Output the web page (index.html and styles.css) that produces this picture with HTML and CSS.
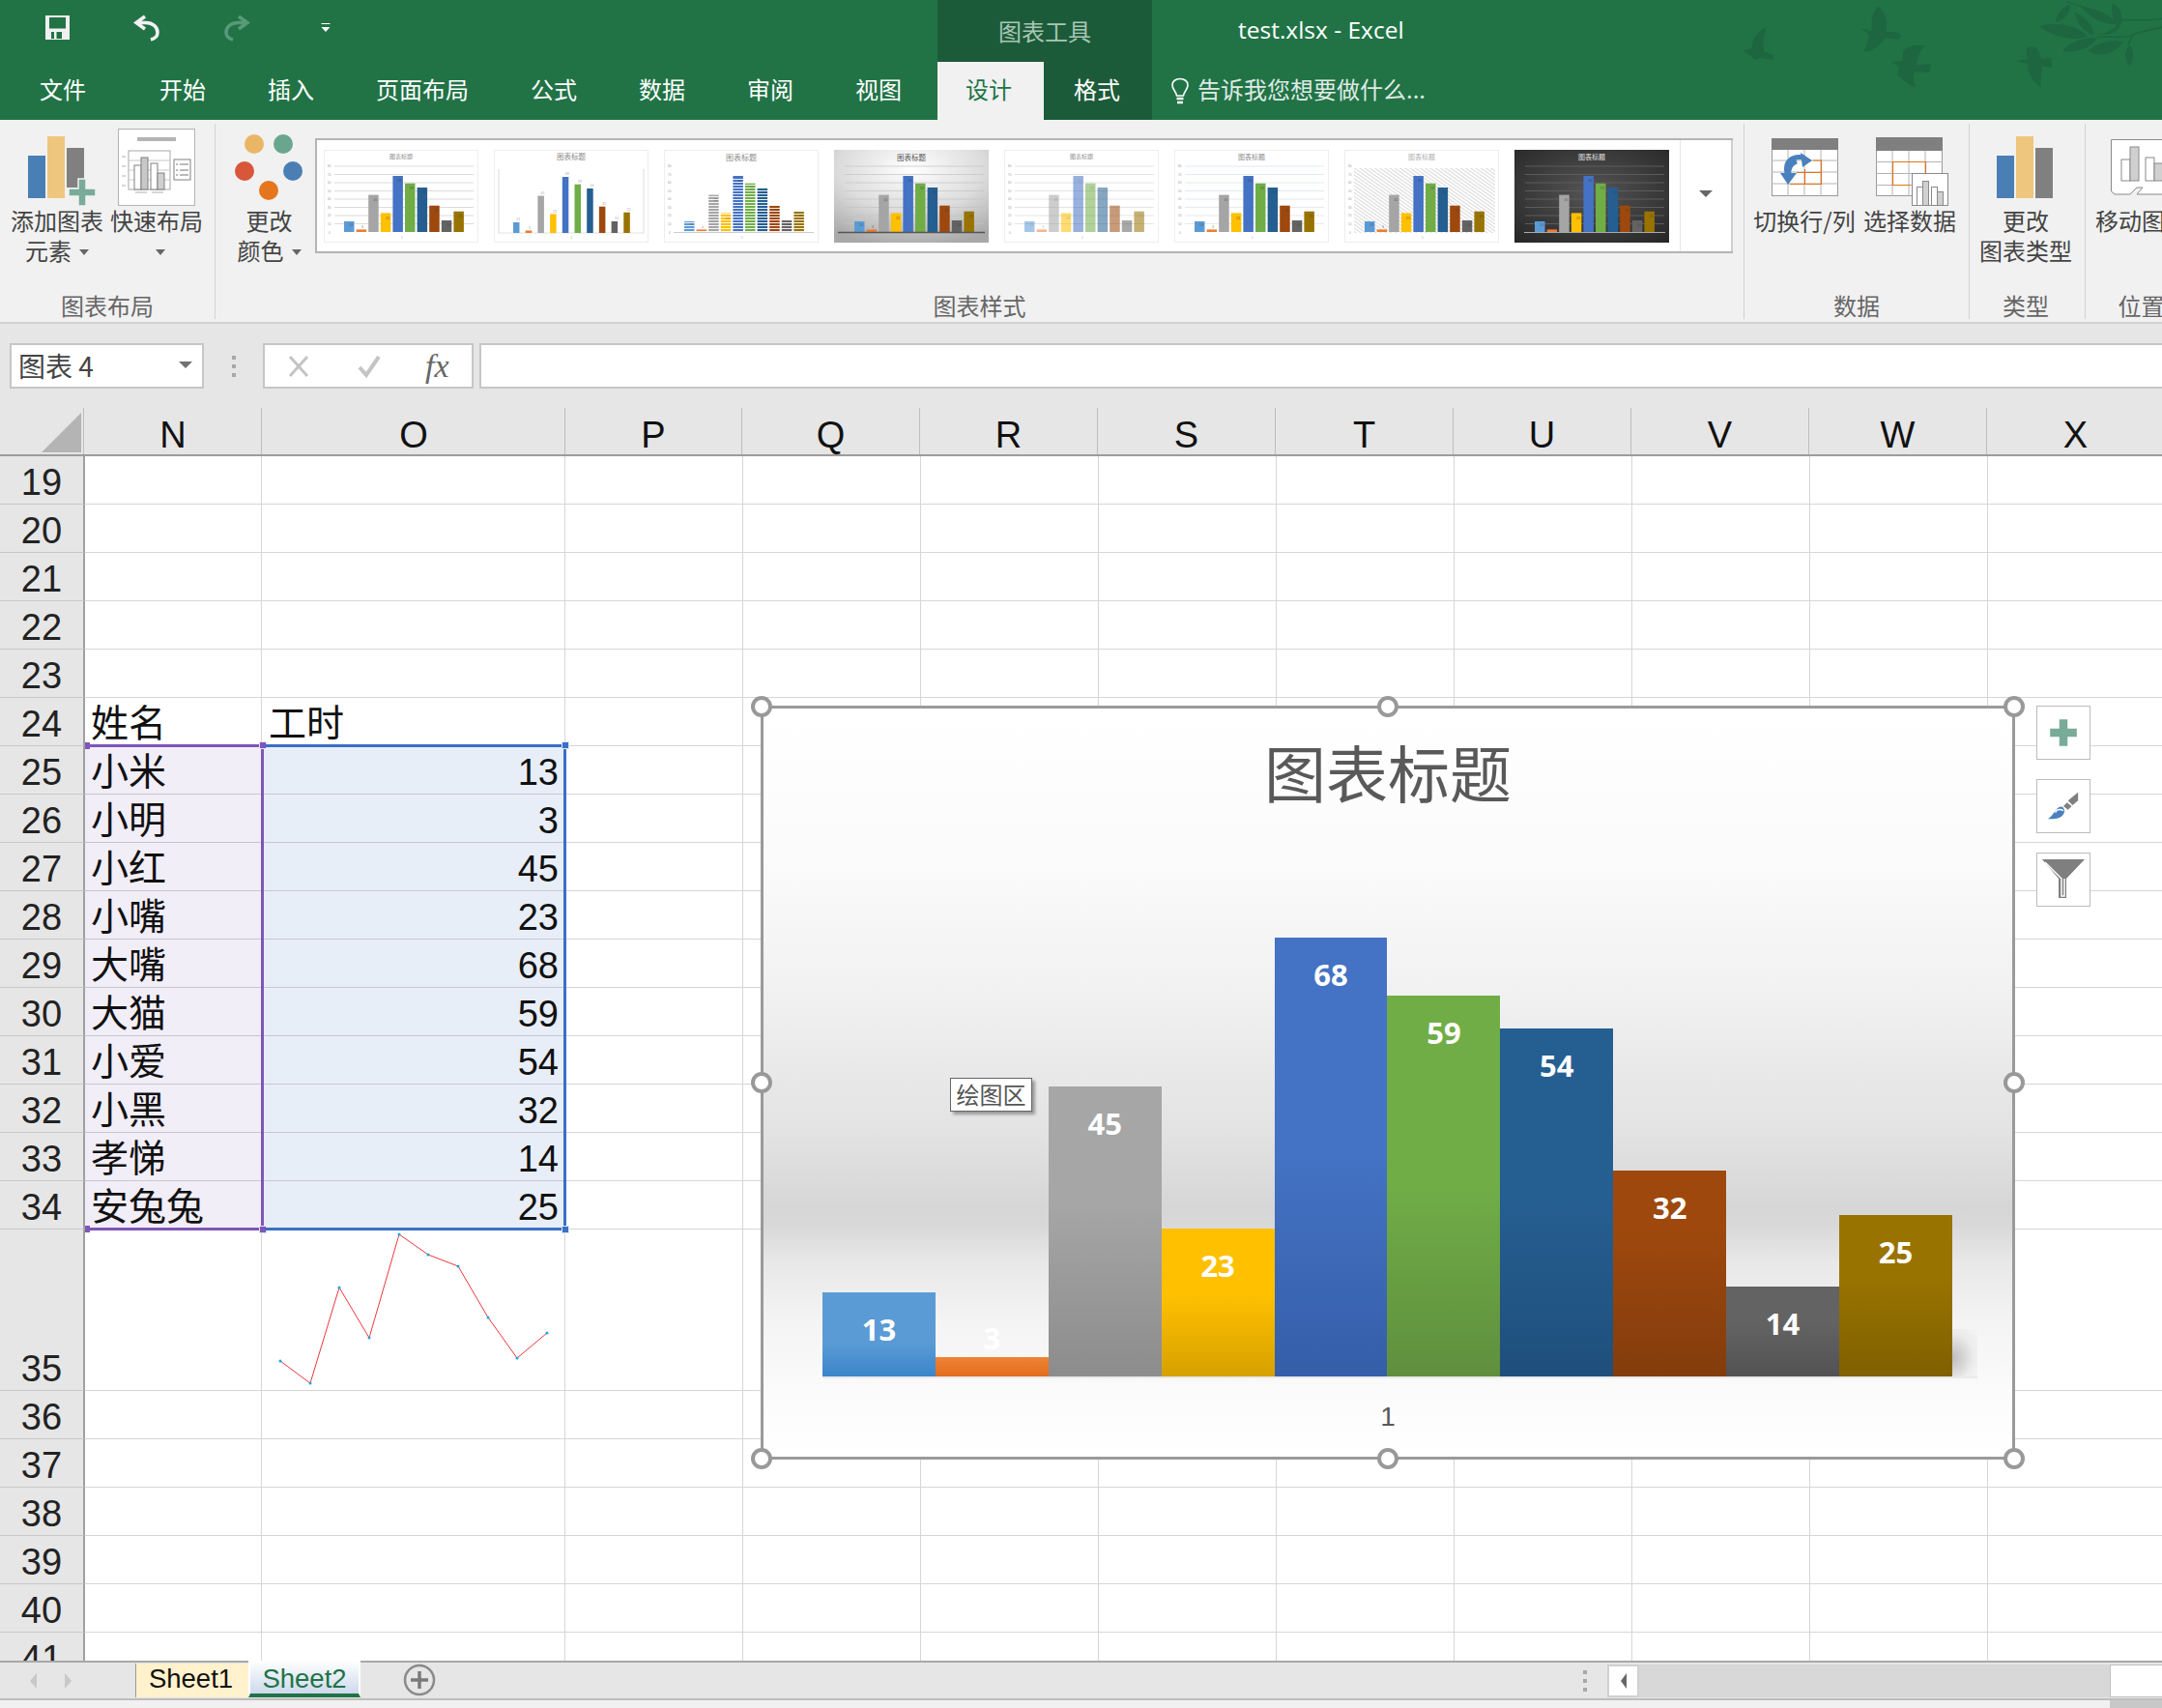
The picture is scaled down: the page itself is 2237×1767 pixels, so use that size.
FILE: index.html
```html
<!DOCTYPE html>
<html lang="zh">
<head>
<meta charset="utf-8">
<title>test.xlsx - Excel</title>
<link rel="stylesheet" href="styles.css">
</head>
<body>
<svg class="defs" width="0" height="0" aria-hidden="true">
  <defs>
    <pattern id="stripes" width="4" height="3" patternUnits="userSpaceOnUse"><rect width="4" height="0.900" fill="#fff"/></pattern>
    <pattern id="hatch" width="3" height="3" patternUnits="userSpaceOnUse" patternTransform="rotate(35)"><rect width="3" height="1" fill="#d8d8d8"/></pattern>
    <radialGradient id="silver" cx="50%" cy="20%" r="85%"><stop offset="0" stop-color="#fff"/><stop offset=".55" stop-color="#dcdcdc"/><stop offset="1" stop-color="#a8a8a8"/></radialGradient>
    <radialGradient id="dark" cx="50%" cy="45%" r="75%"><stop offset="0" stop-color="#555"/><stop offset="1" stop-color="#252525"/></radialGradient>
    <g id="lines">
      <path d="M11 17H155M11 25.500H155M11 34H155M11 42.500H155M11 51H155M11 59.500H155M11 68H155M11 76.500H155" stroke-width="1"/>
    </g>
    <g id="ticks" font-size="3" fill="#999" font-family="Liberation Sans">
      <text x="4" y="18">80</text><text x="4" y="27">70</text><text x="4" y="35">60</text><text x="4" y="44">50</text><text x="4" y="52">40</text><text x="4" y="61">30</text><text x="4" y="69">20</text><text x="4" y="78">10</text><text x="5" y="87">0</text>
      <text x="80" y="92">1</text>
    </g>
    <g id="tb">
      <rect x="21" y="74" width="10.500" height="11" fill="#5b9bd5"/>
      <rect x="33.600" y="82.400" width="10.500" height="2.600" fill="#ed7d31"/>
      <rect x="46.200" y="46.600" width="10.500" height="38.400" fill="#a5a5a5"/>
      <rect x="58.800" y="65.400" width="10.500" height="19.600" fill="#ffc000"/>
      <rect x="71.400" y="27" width="10.500" height="58" fill="#4472c4"/>
      <rect x="84" y="34.700" width="10.500" height="50.300" fill="#70ad47"/>
      <rect x="96.600" y="39" width="10.500" height="46" fill="#255e91"/>
      <rect x="109.200" y="57.700" width="10.500" height="27.300" fill="#9e480e"/>
      <rect x="121.800" y="73" width="10.500" height="12" fill="#636363"/>
      <rect x="134.400" y="63.700" width="10.500" height="21.300" fill="#997300"/>
      <g font-size="3.500" fill="#404040" opacity=".7" font-family="Liberation Sans">
        <text x="26" y="79">13</text><text x="39" y="81">3</text><text x="51.500" y="53">45</text><text x="64" y="72">23</text><text x="76.500" y="33">68</text><text x="89" y="41">59</text><text x="102" y="45">54</text><text x="114.500" y="64">32</text><text x="127" y="79">14</text><text x="139.500" y="70">25</text>
      </g>
    </g>
    <g id="tbn">
      <rect x="20" y="75" width="6.500" height="11" fill="#5b9bd5"/>
      <rect x="32.700" y="83.400" width="6.500" height="2.600" fill="#ed7d31"/>
      <rect x="45.400" y="47.600" width="6.500" height="38.400" fill="#a5a5a5"/>
      <rect x="58.100" y="66.400" width="6.500" height="19.600" fill="#ffc000"/>
      <rect x="70.800" y="28" width="6.500" height="58" fill="#4472c4"/>
      <rect x="83.500" y="35.700" width="6.500" height="50.300" fill="#70ad47"/>
      <rect x="96.200" y="40" width="6.500" height="46" fill="#255e91"/>
      <rect x="108.900" y="58.700" width="6.500" height="27.300" fill="#9e480e"/>
      <rect x="121.600" y="74" width="6.500" height="12" fill="#636363"/>
      <rect x="134.300" y="64.700" width="6.500" height="21.300" fill="#997300"/>
      <g font-size="3.500" fill="#aaa" font-family="Liberation Sans">
        <text x="23" y="73">13</text><text x="36" y="82">3</text><text x="48.500" y="46">45</text><text x="61" y="65">23</text><text x="74" y="26">68</text><text x="87" y="34">59</text><text x="99.500" y="38">54</text><text x="112" y="57">32</text><text x="125" y="72">14</text><text x="137.500" y="63">25</text>
      </g>
    </g>
  </defs>
</svg>

<div class="app">
  <header class="top">
    <svg class="birds" viewBox="0 0 1341 372" aria-hidden="true">
      <path d="M112 84C95 92 70 110 68 150L40 155L78 185L92 180L135 185L135 172L105 160C102 130 108 105 112 84Z"/>
      <path d="M460 20C445 30 438 60 440 95L408 88L432 110C428 130 418 150 416 162C445 160 465 140 480 118L525 122L532 108L515 100L484 100C490 70 485 35 460 20Z"/>
      <path d="M606 142C580 138 550 142 538 160L535 190L500 192L525 208L520 232C535 250 560 265 578 272C570 250 565 235 575 222L620 225L624 198L580 203C580 175 590 160 606 142Z"/>
      <path d="M935 145C920 145 915 155 925 182L885 190L925 198C920 225 945 258 965 272C965 245 965 225 968 205L1000 210L998 180L965 182C965 165 955 148 935 145Z"/>
      <path d="M962 82C1010 65 1080 80 1110 112C1070 130 1000 115 962 82Z"/>
      <path d="M1032 158C1060 125 1100 115 1138 118C1120 150 1080 165 1032 158Z"/>
      <path d="M1112 158C1140 130 1190 122 1220 130C1200 165 1150 182 1112 158Z"/>
      <path d="M1240 205C1222 180 1222 160 1242 140C1255 160 1255 185 1240 205Z"/>
      <path d="M1070 38C1100 50 1130 80 1128 110C1095 95 1075 70 1070 38Z"/>
      <path d="M1012 70C1012 40 1035 20 1055 15C1055 40 1040 60 1012 70Z"/>
      <path d="M1095 25C1130 22 1180 45 1205 75C1165 78 1120 60 1095 25Z"/>
      <path d="M1188 10C1215 25 1225 60 1205 85C1190 70 1182 40 1188 10Z"/>
      <path d="M1145 108C1175 100 1200 85 1215 65C1215 90 1190 110 1145 108Z"/>
      <path d="M1341 58C1300 66 1260 60 1215 62M1341 85C1300 96 1270 95 1250 110C1220 120 1180 112 1140 115M1045 5C1075 15 1110 25 1150 45M1250 110L1235 140" fill="none" stroke="#1d6640" stroke-width="5"/>
    </svg>
    <div class="title-row">
      <div class="qat">
        <svg class="qi-save" viewBox="0 0 25 25" aria-hidden="true"><path fill-rule="evenodd" fill="#f1f1f1" d="M0 0H25V25H0ZM4 2V13.500H21V2ZM6 17V24H9V17ZM11.500 17V24H17V17Z"/></svg>
        <svg class="qi-undo" viewBox="0 0 28 28" aria-hidden="true"><path d="M12 2L3 8.500L12 15M3 8.500H13C20 8.500 25 13 25 18.500C25 23 22 25 18 26" fill="none" stroke="#f1f1f1" stroke-width="3.500"/></svg>
        <svg class="qi-redo" viewBox="0 0 28 28" aria-hidden="true"><path d="M16 2L25 8.500L16 15M25 8.500H15C8 8.500 3 13 3 18.500C3 23 6 25 10 26" fill="none" stroke="#569a78" stroke-width="3.500"/></svg>
        <svg class="qi-more" viewBox="0 0 10 10" aria-hidden="true"><path d="M0.500 0.500H9.500" stroke="#fff" stroke-width="1"/><path d="M0.500 4H9.500L5 9Z" fill="#fff"/></svg>
      </div>
      <div class="tools-label">图表工具</div>
      <div class="doc-title">test.xlsx - Excel</div>
    </div>
    <nav class="tab-row">
      <div class="tab tab-file">文件</div>
      <div class="tab">开始</div>
      <div class="tab">插入</div>
      <div class="tab">页面布局</div>
      <div class="tab">公式</div>
      <div class="tab">数据</div>
      <div class="tab">审阅</div>
      <div class="tab">视图</div>
      <div class="tab tab-active">设计</div>
      <div class="tab tab-tool">格式</div>
      <div class="tell">
        <svg class="bulb" viewBox="0 0 20 28" aria-hidden="true"><path d="M6.500 19C6 14 2 13 2 8C2 4 5.500 1.500 10 1.500S18 4 18 8C18 13 14 14 13.500 19Z" fill="none" stroke="#fff" stroke-width="1.600"/><path d="M6.500 22H13.500M7 26H13" stroke="#fff" stroke-width="2.400"/></svg>
        <span>告诉我您想要做什么...</span>
      </div>
    </nav>
  </header>

  <section class="ribbon">
    <div class="group g-layout">
      <div class="group-body">
        <div class="big-btn">
          <svg class="icon-box" viewBox="0 0 104 82" aria-hidden="true">
            <rect x="22" y="28" width="18" height="44" fill="#4a7fb5"/>
            <rect x="42" y="8" width="18" height="64" fill="#eec67e"/>
            <rect x="62" y="20" width="18" height="41" fill="#808080"/>
            <path d="M74 52H82V62H92V70H82V80H74V70H64V62H74Z" fill="#78ab98" stroke="#f1f1f1" stroke-width="1.500"/>
          </svg>
          <div class="big-label">添加图表<br>元素<i class="caret"></i></div>
        </div>
        <div class="big-btn btn-quick">
          <svg class="icon-box" viewBox="-11 0 104 82" aria-hidden="true">
            <rect x="0.500" y="0.500" width="79" height="79" fill="#fff" stroke="#b4b4b4"/>
            <rect x="20" y="9" width="40" height="4" fill="#b4b4b4"/>
            <rect x="11" y="23" width="43" height="40" fill="none" stroke="#a8a8a8"/>
            <path d="M11 33H54M11 43H54M11 53H54" stroke="#c8c8c8"/>
            <rect x="17" y="38" width="7" height="25" fill="#fff" stroke="#808080"/>
            <rect x="24" y="30" width="7" height="33" fill="#c8c8c8" stroke="#808080"/>
            <rect x="34" y="36" width="7" height="27" fill="#fff" stroke="#808080"/>
            <rect x="41" y="46" width="7" height="17" fill="#d0d0d0" stroke="#808080"/>
            <rect x="58" y="32" width="17" height="21" fill="#fff" stroke="#808080"/>
            <path d="M60 37H62M64 37H73M60 43H62M64 43H73M60 48H62M64 48H73" stroke="#777"/>
            <path d="M4 29H8M4 39H8M4 49H8M4 59H8M18 66H30M35 66H47" stroke="#b0b0b0"/>
          </svg>
          <div class="big-label">快速布局<br><i class="caret caret-only"></i></div>
        </div>
      </div>
      <div class="group-label">图表布局</div>
    </div>

    <div class="group g-style">
      <div class="group-body">
        <div class="big-btn btn-colors">
          <svg class="icon-box" viewBox="0 0 103 82" aria-hidden="true">
            <circle cx="40" cy="16" r="10" fill="#ebb566"/>
            <circle cx="70" cy="16" r="10" fill="#69a58f"/>
            <circle cx="30" cy="44" r="10" fill="#d8563a"/>
            <circle cx="80" cy="44" r="10" fill="#4a7eb4"/>
            <circle cx="55" cy="64" r="10" fill="#e6761d"/>
          </svg>
          <div class="big-label">更改<br>颜色<i class="caret"></i></div>
        </div>
        <div class="gallery">
          <div class="thumbs">
            <svg class="thumb thumb-line" viewBox="0 0 160 96" aria-hidden="true">
              <text class="t-title" x="80" y="9" font-size="6">图表标题</text>
              <use href="#lines" stroke="#dcdcdc"/><use href="#ticks"/><use href="#tb"/>
            </svg>
            <svg class="thumb thumb-line" viewBox="0 0 160 96" aria-hidden="true">
              <text class="t-title" x="80" y="10" font-size="7.500">图表标题</text>
              <path d="M5 20V86H155V20" fill="none" stroke="#e2e2e2" stroke-width="1.200"/>
              <use href="#tbn"/>
              <text x="80" y="92" font-size="3" fill="#999" font-family="Liberation Sans">1</text>
            </svg>
            <svg class="thumb thumb-line" viewBox="0 0 160 96" aria-hidden="true">
              <text class="t-title" x="80" y="11" font-size="8">图表标题</text>
              <use href="#ticks"/><use href="#tb"/>
              <rect x="18" y="28" width="130" height="57" fill="url(#stripes)"/>
              <path d="M10 85.500H155" stroke="#ccc"/>
            </svg>
            <svg class="thumb" viewBox="0 0 160 96" aria-hidden="true">
              <rect width="160" height="96" fill="url(#silver)"/>
              <text class="t-title t-dark" x="80" y="11" font-size="7.500">图表标题</text>
              <g opacity=".7"><use href="#lines" stroke="#c4c4c4"/></g>
              <use href="#tb"/>
              <path d="M4 85.500H156" stroke="#555" stroke-width="1.500"/>
            </svg>
            <svg class="thumb thumb-line" viewBox="0 0 160 96" aria-hidden="true">
              <text class="t-title" x="80" y="9" font-size="6">图表标题</text>
              <use href="#lines" stroke="#e4e4e4"/><use href="#ticks"/>
              <g opacity=".55"><use href="#tb"/></g>
            </svg>
            <svg class="thumb thumb-line" viewBox="0 0 160 96" aria-hidden="true">
              <text class="t-title" x="80" y="10" font-size="7">图表标题</text>
              <use href="#lines" stroke="#e3eaf0"/><use href="#ticks"/><use href="#tb"/>
            </svg>
            <svg class="thumb thumb-line" viewBox="0 0 160 96" aria-hidden="true">
              <text class="t-title t-faint" x="80" y="10" font-size="7">图表标题</text>
              <rect x="10" y="19" width="146" height="67" fill="url(#hatch)"/>
              <use href="#ticks"/><use href="#tb"/>
            </svg>
            <svg class="thumb" viewBox="0 0 160 96" aria-hidden="true">
              <rect width="160" height="96" fill="url(#dark)"/>
              <text class="t-title t-light" x="80" y="10" font-size="7">图表标题</text>
              <use href="#lines" stroke="#5c5c5c"/><use href="#tb"/>
              <path d="M10 85.500H156" stroke="#aaa"/>
            </svg>
          </div>
          <div class="gallery-more"><i class="more-arrow"></i></div>
        </div>
      </div>
      <div class="group-label">图表样式</div>
    </div>

    <div class="group g-data">
      <div class="group-body">
        <div class="big-btn btn-switch">
          <svg class="icon-box" viewBox="-23 -10 114 82" aria-hidden="true">
            <rect x="0.500" y="0.500" width="68" height="59" fill="#fff" stroke="#9a9a9a"/>
            <rect width="69" height="12" fill="#7f7f7f"/>
            <path d="M17 12V60M34 12V60M51 12V60M0 23H69M0 35H69M0 47H69" stroke="#b4b4b4"/>
            <path d="M43 23H51.500V47.500H19M26 35.500H51M34.500 32V47" fill="none" stroke="#e0761f" stroke-width="1.200"/>
            <path d="M16 36C13 24 22 18 33 20" fill="none" stroke="#4a80bd" stroke-width="5"/>
            <path d="M30 15L42 23L32 30Z" fill="#4a80bd"/>
            <path d="M26 24C20 26 17 30 18 38" fill="none" stroke="#4a80bd" stroke-width="5"/>
            <path d="M9 36L17 48L26 36Z" fill="#4a80bd"/>
          </svg>
          <div class="big-label">切换行/列</div>
        </div>
        <div class="big-btn btn-select">
          <svg class="icon-box" viewBox="-17 -9 104 82" aria-hidden="true">
            <rect x="0.500" y="0.500" width="68" height="60" fill="#fff" stroke="#9a9a9a"/>
            <rect width="69" height="14" fill="#7f7f7f"/>
            <path d="M17 14V61M34 14V61M51 14V61M0 25.500H69M0 37.500H69M0 49.500H69" stroke="#b4b4b4"/>
            <path d="M51.500 37V25.500H17.500V49.500H36" fill="none" stroke="#e0761f" stroke-width="1.200"/>
            <rect x="37.500" y="37.500" width="37" height="33" fill="#fff" stroke="#8a8a8a"/>
            <rect x="42.500" y="51.500" width="6" height="19" fill="#fff" stroke="#8a8a8a"/>
            <rect x="48.500" y="45.500" width="6" height="25" fill="#d0d0d0" stroke="#8a8a8a"/>
            <rect x="57.500" y="51.500" width="6" height="19" fill="#fff" stroke="#8a8a8a"/>
            <rect x="63.500" y="56.500" width="6" height="14" fill="#d0d0d0" stroke="#8a8a8a"/>
          </svg>
          <div class="big-label">选择数据</div>
        </div>
      </div>
      <div class="group-label">数据</div>
    </div>

    <div class="group g-type">
      <div class="group-body">
        <div class="big-btn btn-type">
          <svg class="icon-box" viewBox="0 0 116 82" aria-hidden="true">
            <rect x="28" y="28" width="18" height="44" fill="#4a7fb5"/>
            <rect x="48" y="8" width="18" height="64" fill="#eec67e"/>
            <rect x="68" y="20" width="18" height="52" fill="#808080"/>
          </svg>
          <div class="big-label">更改<br>图表类型</div>
        </div>
      </div>
      <div class="group-label">类型</div>
    </div>

    <div class="group g-move">
      <div class="group-body">
        <div class="big-btn btn-move">
          <svg class="icon-box" viewBox="-16 -11 96 82" aria-hidden="true">
            <path d="M0.500 0.500H90V50H62L55 57H27L33 50H27L20 57H4L0.500 54Z" fill="#fff" stroke="#8a8a8a"/>
            <rect x="11" y="21" width="9" height="22" fill="#fff" stroke="#8a8a8a"/>
            <rect x="20" y="8" width="9" height="35" fill="#d0d0d0" stroke="#8a8a8a"/>
            <rect x="36" y="19" width="9" height="24" fill="#fff" stroke="#8a8a8a"/>
            <rect x="45" y="25" width="9" height="18" fill="#d0d0d0" stroke="#8a8a8a"/>
          </svg>
          <div class="big-label">移动图表</div>
        </div>
      </div>
      <div class="group-label">位置</div>
    </div>
  </section>

  <section class="formula-band">
    <div class="name-box"><span>图表 4</span><i class="name-arrow"></i></div>
    <div class="grip"><i></i><i></i><i></i></div>
    <div class="fx-box">
      <svg class="fx-x" viewBox="0 0 24 24" aria-hidden="true"><path d="M3 2L21 22M21 2L3 22" stroke="#c4c4c4" stroke-width="3"/></svg>
      <svg class="fx-c" viewBox="0 0 26 24" aria-hidden="true"><path d="M3 13L10 21L23 2" fill="none" stroke="#c4c4c4" stroke-width="4"/></svg>
      <span class="fx-t">fx</span>
    </div>
    <div class="formula-input"></div>
  </section>

  <section class="col-head">
    <div class="corner"><svg viewBox="0 0 41 41" aria-hidden="true"><path d="M41 0V41H0Z" fill="#b4b4b4"/></svg></div>
    <div class="ch ch-n">N</div><div class="ch ch-o">O</div><div class="ch ch-p">P</div>
    <div class="ch">Q</div><div class="ch">R</div><div class="ch">S</div><div class="ch">T</div>
    <div class="ch">U</div><div class="ch">V</div><div class="ch">W</div><div class="ch">X</div>
  </section>

  <main class="sheet">
    <div class="row"><div class="rh">19</div><div class="c cn"></div><div class="c co"></div><div class="rest"></div></div>
    <div class="row"><div class="rh">20</div><div class="c cn"></div><div class="c co"></div><div class="rest"></div></div>
    <div class="row"><div class="rh">21</div><div class="c cn"></div><div class="c co"></div><div class="rest"></div></div>
    <div class="row"><div class="rh">22</div><div class="c cn"></div><div class="c co"></div><div class="rest"></div></div>
    <div class="row"><div class="rh">23</div><div class="c cn"></div><div class="c co"></div><div class="rest"></div></div>
    <div class="row"><div class="rh">24</div><div class="c cn">姓名</div><div class="c co co-text">工时</div><div class="rest"></div></div>
    <div class="row"><div class="rh">25</div><div class="c cn s-n">小米</div><div class="c co s-o">13</div><div class="rest"></div></div>
    <div class="row"><div class="rh">26</div><div class="c cn s-n">小明</div><div class="c co s-o">3</div><div class="rest"></div></div>
    <div class="row"><div class="rh">27</div><div class="c cn s-n">小红</div><div class="c co s-o">45</div><div class="rest"></div></div>
    <div class="row"><div class="rh">28</div><div class="c cn s-n">小嘴</div><div class="c co s-o">23</div><div class="rest"></div></div>
    <div class="row"><div class="rh">29</div><div class="c cn s-n">大嘴</div><div class="c co s-o">68</div><div class="rest"></div></div>
    <div class="row"><div class="rh">30</div><div class="c cn s-n">大猫</div><div class="c co s-o">59</div><div class="rest"></div></div>
    <div class="row"><div class="rh">31</div><div class="c cn s-n">小爱</div><div class="c co s-o">54</div><div class="rest"></div></div>
    <div class="row"><div class="rh">32</div><div class="c cn s-n">小黑</div><div class="c co s-o">32</div><div class="rest"></div></div>
    <div class="row"><div class="rh">33</div><div class="c cn s-n">孝悌</div><div class="c co s-o">14</div><div class="rest"></div></div>
    <div class="row"><div class="rh">34</div><div class="c cn s-n">安兔兔</div><div class="c co s-o">25</div><div class="rest"></div></div>
    <div class="row row-tall"><div class="rh">35</div><div class="c cn"></div>
      <div class="c co">
        <svg class="spark" viewBox="0 0 314 166" aria-hidden="true">
          <polyline points="19,136 50,159 80,60 111,112 142,5 172,26 203,38 234,91 264,133 295,107" fill="none" stroke="#f0363c" stroke-width="1"/>
          <g fill="#19a7e0">
            <circle cx="19" cy="136" r="1.500"/><circle cx="50" cy="159" r="1.500"/><circle cx="80" cy="60" r="1.500"/><circle cx="111" cy="112" r="1.500"/><circle cx="142" cy="5" r="1.500"/><circle cx="172" cy="26" r="1.500"/><circle cx="203" cy="38" r="1.500"/><circle cx="234" cy="91" r="1.500"/><circle cx="264" cy="133" r="1.500"/><circle cx="295" cy="107" r="1.500"/>
          </g>
        </svg>
      </div><div class="rest"></div></div>
    <div class="row"><div class="rh">36</div><div class="c cn"></div><div class="c co"></div><div class="rest"></div></div>
    <div class="row"><div class="rh">37</div><div class="c cn"></div><div class="c co"></div><div class="rest"></div></div>
    <div class="row"><div class="rh">38</div><div class="c cn"></div><div class="c co"></div><div class="rest"></div></div>
    <div class="row"><div class="rh">39</div><div class="c cn"></div><div class="c co"></div><div class="rest"></div></div>
    <div class="row"><div class="rh">40</div><div class="c cn"></div><div class="c co"></div><div class="rest"></div></div>
    <div class="row"><div class="rh">41</div><div class="c cn"></div><div class="c co"></div><div class="rest"></div></div>

    <div class="sel sel-n"><i class="sh sh-small sh-tl"></i><i class="sh sh-n sh-tr"></i><i class="sh sh-small sh-bl"></i><i class="sh sh-n sh-br"></i></div>
    <div class="sel sel-o"><i class="sh sh-o sh-tr"></i><i class="sh sh-o sh-br"></i></div>

    <div class="chart">
      <div class="chart-title">图表标题</div>
      <div class="plot">
        <div class="bar b1" style="height:87px"><span>13</span></div>
        <div class="bar b2" style="height:20px"><span class="over">3</span></div>
        <div class="bar b3" style="height:300px"><span>45</span></div>
        <div class="bar b4" style="height:153px"><span>23</span></div>
        <div class="bar b5" style="height:454px"><span>68</span></div>
        <div class="bar b6" style="height:394px"><span>59</span></div>
        <div class="bar b7" style="height:360px"><span>54</span></div>
        <div class="bar b8" style="height:213px"><span>32</span></div>
        <div class="bar b9" style="height:93px"><span>14</span></div>
        <div class="bar b10" style="height:167px"><span>25</span></div>
        <div class="floor-shade"></div>
      </div>
      <div class="axis-label">1</div>
      <div class="plot-tip">绘图区</div>
      <i class="hd hd-tl"></i><i class="hd hd-tc"></i><i class="hd hd-tr"></i>
      <i class="hd hd-ml"></i><i class="hd hd-mr"></i>
      <i class="hd hd-bl"></i><i class="hd hd-bc"></i><i class="hd hd-br"></i>
    </div>

    <div class="chart-tools">
      <div class="tool"><svg viewBox="0 0 32 32" aria-hidden="true"><path d="M12 3H20V12H29V20H20V29H12V20H3V12H12Z" fill="#78ab98"/></svg></div>
      <div class="tool"><svg viewBox="0 0 36 36" aria-hidden="true"><path d="M34 3V12L28 17L23 12Z" fill="#7f7f7f"/><path d="M22 14L27 18L23 22L18 18Z" fill="#7f7f7f"/><path d="M17 19C20 21 20 26 16 29C12 32 6 32 1 32C6 29 8 24 11 21C13 19 15 18 17 19Z" fill="#4a80bd"/><path d="M9 25C11 21 15 21 18 23" fill="none" stroke="#fff" stroke-width="1.500"/></svg></div>
      <div class="tool"><svg viewBox="0 0 44 44" aria-hidden="true"><path d="M0 1H44L25 21V41H17V21Z" fill="#7f7f7f"/><path d="M3 4L20 21V39H23V21" fill="none" stroke="#fff" stroke-width="1.500"/></svg></div>
    </div>
  </main>

  <footer class="tabbar">
    <div class="nav-arrows"><i class="na na-l"></i><i class="na na-r"></i></div>
    <div class="sheet-tab st-one">Sheet1</div>
    <div class="sheet-tab st-two">Sheet2</div>
    <svg class="add-sheet" viewBox="0 0 34 34" aria-hidden="true"><circle cx="17" cy="17" r="15" fill="none" stroke="#8a8a8a" stroke-width="2.500"/><path d="M17 8V26M8 17H26" stroke="#7a7a7a" stroke-width="3.500"/></svg>
    <div class="spacer"></div>
    <div class="grip grip-h"><i></i><i></i><i></i></div>
    <div class="scroll-left"><i></i></div>
    <div class="scroll-track"></div>
    <div class="scroll-thumb"></div>
  </footer>
  <div class="status"><div class="status-end"></div></div>
</div>
</body>
</html>
```
FILE: styles.css
```css
* { box-sizing: border-box; }
html, body { margin: 0; padding: 0; }
body { width: 2237px; height: 1767px; overflow: hidden; background: #fff; font-family: "Noto Sans CJK SC", "Liberation Sans", sans-serif; color: #111; }
i { display: block; font-style: normal; }
.defs { position: absolute; }
.app { width: 2237px; height: 1767px; display: flex; flex-direction: column; overflow: hidden; }

/* title + tabs */
.top { height: 124px; flex: none; background: #217346; position: relative; color: #fff; }
.birds { position: absolute; left: 1790px; top: 0; width: 447px; height: 124px; fill: #1d6640; }
.title-row { height: 64px; display: flex; position: relative; }
.qat { width: 970px; display: flex; align-items: center; padding: 0 0 7px 47px; }
.qi-save { width: 25px; height: 25px; }
.qi-undo { width: 28px; height: 28px; margin-left: 66px; }
.qi-redo { width: 28px; height: 28px; margin-left: 65px; }
.qi-more { width: 10px; height: 10px; margin-left: 73px; }
.tools-label { width: 222px; background: #1c5b39; color: #a8c6b5; font-size: 24px; line-height: 63px; text-align: center; }
.doc-title { margin-left: 89px; font-family: "Open Sans", sans-serif; font-size: 24.500px; line-height: 62px; color: #fff; }
.tab-row { height: 60px; display: flex; position: relative; font-size: 24px; line-height: 56px; }
.tab { padding: 0 32px; color: #fff; flex: none; }
.tab-file { padding: 0 44px 0 41px; }
.tab-active { margin-left: 5px; width: 110px; padding: 0 29px; background: #f1f1f1; color: #217346; }
.tab-tool { width: 112px; padding: 0 31px; background: #1c5b39; }
.tell { display: flex; align-items: center; color: #dfeae4; margin-left: 19px; padding-bottom: 4px; }
.bulb { width: 20px; height: 28px; margin-right: 8px; margin-top: 3px; }

/* ribbon */
.ribbon { height: 211px; flex: none; background: #f1f1f1; border-bottom: 2px solid #d2d2d2; display: flex; padding-top: 4px; overflow: hidden; }
.group { height: 202px; flex: none; display: flex; flex-direction: column; border-right: 1px solid #d2d2d2; padding-top: 5px; }
.group-body { flex: 1; display: flex; min-height: 0; }
.group-label { height: 28px; font-size: 24px; line-height: 28px; text-align: center; color: #666; }
.g-layout { width: 223px; }
.g-layout .group-body { padding-left: 7px; }
.g-style { width: 1582px; }
.g-data { width: 233px; }
.g-data .group-body { padding-left: 5px; }
.g-type { width: 120px; }
.g-type .group-label { padding-right: 3px; }
.g-move { width: 120px; border-right: 0; }
.g-move .group-body { padding-left: 10px; }
.g-move .group-label { padding-right: 5px; }
.big-btn { width: 104px; flex: none; display: flex; flex-direction: column; align-items: center; }
.btn-quick .big-label { padding-right: 2px; }
.btn-colors { width: 103px; }
.btn-colors .big-label { padding-left: 8px; }
.btn-switch { width: 114px; }
.btn-select { width: 104px; }
.btn-type { width: 116px; }
.btn-move { width: 96px; }
.icon-box { height: 82px; width: 100%; flex: none; margin-bottom: -3px; overflow: visible; }
.big-label { font-size: 24px; line-height: 31px; color: #444; text-align: center; white-space: nowrap; }
.caret { display: inline-block; width: 0; height: 0; border: 5px solid transparent; border-top: 6px solid #666; border-bottom: 0; margin-left: 8px; vertical-align: 5px; }
.caret-only { margin-left: 8px; }

.gallery { width: 1467px; height: 119px; margin-top: 10px; background: #fff; border-top: 2px solid #b4b4b4; border-bottom: 2px solid #b4b4b4; border-left: 2px solid #b4b4b4; display: flex; flex: none; }
.thumbs { flex: 1; display: flex; gap: 16px; padding: 10px 0 0 7px; }
.thumb { width: 160px; height: 96px; flex: none; background: #fff; }
.thumb-line { outline: 1px solid #eeeeee; outline-offset: -1px; }
.thumb text { font-family: "Noto Sans CJK SC", sans-serif; text-anchor: middle; }
.t-title { fill: #8c8c8c; }
.t-dark { fill: #555; }
.t-faint { fill: #b0b0b0; }
.t-light { fill: #e0e0e0; }
.gallery-more { width: 55px; flex: none; border-left: 1px solid #e6e6e6; border-right: 2px solid #d0d0d0; display: flex; justify-content: center; padding-top: 52px; }
.more-arrow { width: 0; height: 0; border-left: 7px solid transparent; border-right: 7px solid transparent; border-top: 7px solid #666; }

/* formula */
.formula-band { height: 87px; flex: none; background: #e6e6e6; display: flex; padding: 20px 0 20px 10px; }
.name-box { width: 201px; height: 47px; background: #fff; border: 2px solid #c6c6c6; display: flex; align-items: center; padding: 0 9px 2px 7px; justify-content: space-between; font-size: 28px; color: #444; }
.name-arrow { width: 0; height: 0; border-left: 7px solid transparent; border-right: 7px solid transparent; border-top: 7px solid #707070; margin-right: 1px; }
.grip { width: 4px; margin: 0 28px 0 29px; display: flex; flex-direction: column; justify-content: center; gap: 5px; }
.grip i { width: 4px; height: 4px; background: #a8a8a8; }
.fx-box { width: 218px; height: 47px; background: #fff; border: 2px solid #c6c6c6; display: flex; align-items: center; position: relative; }
.fx-x { width: 24px; height: 24px; margin-left: 23px; }
.fx-c { width: 26px; height: 24px; margin-left: 48px; }
.fx-t { font-family: "Liberation Serif", serif; font-style: italic; font-size: 34px; color: #666; margin-left: 45px; line-height: 40px; }
.formula-input { flex: 1; height: 47px; margin-left: 6px; background: #fff; border: 2px solid #c6c6c6; border-right: 0; }

/* column headers */
.col-head { height: 50px; flex: none; background: #e6e6e6; display: flex; border-bottom: 2px solid #9c9c9c; }
.corner { width: 87px; flex: none; border-right: 1px solid #c0c0c0; padding: 5px 3px 0 43px; }
.corner svg { display: block; width: 41px; height: 41px; }
.ch { width: 184px; flex: none; border-right: 1px solid #bdbdbd; font-family: "Liberation Sans", sans-serif; font-size: 38px; line-height: 48px; padding-top: 4px; text-align: center; color: #111; }
.ch-n, .ch-o { padding-left: 1px; }
.ch-o { width: 314px; }
.ch-p { width: 183px; }

/* sheet */
.sheet { flex: 1; min-height: 0; position: relative; overflow: hidden; }
.row { height: 50px; display: flex; }
.row-tall { height: 167px; }
.rh { width: 88px; flex: none; background: #e6e6e6; border-right: 2px solid #a0a0a0; border-bottom: 1px solid #c8c8c8; display: flex; justify-content: center; align-items: flex-end; font-family: "Liberation Sans", sans-serif; font-size: 38px; line-height: 44px; color: #222; }
.c { flex: none; border-right: 1px solid #d6d6d6; border-bottom: 1px solid #d6d6d6; display: flex; align-items: flex-end; font-family: "Liberation Sans", "Noto Sans CJK SC", sans-serif; font-size: 38px; line-height: 44px; position: relative; }
.cn { width: 183px; padding-left: 6px; font-size: 39px; }
.co { width: 314px; padding-right: 6px; justify-content: flex-end; }
.co-text { justify-content: flex-start; padding-left: 7px; font-size: 39px; }
.s-n { background: #f1eef8; border-bottom-color: #c6c6cc; }
.s-o { background: #e8eef8; border-bottom-color: #c4c8d0; }
.rest { flex: 1; border-bottom: 1px solid #d6d6d6; background: repeating-linear-gradient(to right, transparent 0, transparent 183px, #d6d6d6 183px, #d6d6d6 184px); }
.spark { position: absolute; left: 0; top: 0; width: 314px; height: 166px; }

.sel { position: absolute; top: 298px; height: 503px; border-top: 3px solid; border-bottom: 3px solid; }
.sel-n { left: 89px; width: 184px; border-color: #7e57b8; border-right: 3px solid #7e57b8; }
.sel-o { left: 274px; width: 312px; border-color: #3a6fc6; border-right: 3px solid #3a6fc6; }
.sh { position: absolute; width: 8px; height: 8px; }
.sh-small { width: 5px; height: 7px; background: #7e57b8; }
.sh-n { background: #7e57b8; border: 1px solid #e8e0f4; }
.sh-o { background: #3a6fc6; border: 1px solid #dde6f5; }
.sh-tl { left: -1px; top: -5px; }
.sh-bl { left: -1px; bottom: -5px; }
.sh-tr { right: -6px; top: -6px; }
.sh-br { right: -6px; bottom: -6px; }

/* chart */
.chart { position: absolute; left: 787px; top: 258px; width: 1298px; height: 780px; border: 3px solid #9a9a9a; display: flex; flex-direction: column;
  background: linear-gradient(to bottom, #fff 0, #fbfbfb 20%, #f2f2f2 36.500%, #e3e3e3 56.500%, #d6d6d6 66.700%, #d8d8d8 69%, #e8e8e8 74%, #f4f4f4 82%, #f9f9f9 89%, #fcfcfc 93%, #fff 100%); }
.chart-title { height: 90px; margin-top: 19px; flex: none; font-size: 64px; line-height: 90px; text-align: center; color: #595959; font-weight: 400; }
.plot { flex: 1; min-height: 0; display: flex; align-items: flex-end; padding-left: 61px; position: relative; }
.plot::after { content: ""; position: absolute; left: 61px; width: 1195px; bottom: -2px; height: 2px; background: #eaeaea; }
.bar { width: 116.900px; flex: none; text-align: center; color: #fff; font-family: "Open Sans", sans-serif; font-weight: 700; font-size: 31px; line-height: 38px; padding-top: 19px; }
.bar span { display: block; }
.bar .over { margin-top: -58px; }
.b1 { background: linear-gradient(#5b9bd5 60%, #3a85c9); }
.b2 { background: linear-gradient(#ef8335, #e26c20); }
.b3 { background: linear-gradient(#a6a6a6 40%, #8c8c8c); }
.b4 { background: linear-gradient(#ffc000 45%, #d6a000); }
.b5 { background: linear-gradient(#4472c4 50%, #355ea8); }
.b6 { background: linear-gradient(#70ad47 50%, #5f8f3e); }
.b7 { background: linear-gradient(#255e91 50%, #1f4f7b); }
.b8 { background: linear-gradient(#9e480e 30%, #833c0c); }
.b9 { background: linear-gradient(#636363 40%, #525252); }
.b10 { background: linear-gradient(#997300 40%, #7f6000); }
.floor-shade { width: 26px; height: 49px; flex: none; background: radial-gradient(ellipse at 0 60%, #bcbcbc 0, rgba(220,220,220,.4) 60%, rgba(240,240,240,0) 100%); }
.axis-label { height: 83px; flex: none; padding-top: 21px; text-align: center; font-family: "Liberation Sans", sans-serif; font-size: 28px; line-height: 42px; color: #595959; }
.plot-tip { position: absolute; left: 193px; top: 382px; width: 85px; height: 35px; background: #fff; border: 1px solid #666; box-shadow: 3px 3px 3px #999; font-size: 24px; line-height: 32px; text-align: center; color: #555; }
.hd { position: absolute; width: 22px; height: 22px; border: 4px solid #999; border-radius: 50%; background: #fff; }
.hd-tl { left: -13px; top: -13px; }
.hd-tc { left: 635px; top: -13px; }
.hd-tr { right: -13px; top: -13px; }
.hd-ml { left: -13px; top: 376px; }
.hd-mr { right: -13px; top: 376px; }
.hd-bl { left: -13px; bottom: -13px; }
.hd-bc { left: 635px; bottom: -13px; }
.hd-br { right: -13px; bottom: -13px; }
.chart-tools { position: absolute; left: 2107px; top: 258px; display: flex; flex-direction: column; gap: 20px; }
.tool { width: 56px; height: 56px; background: #fff; border: 1px solid #bcbcbc; display: flex; align-items: center; justify-content: center; }
.tool svg { width: 34px; height: 34px; }
.tool:last-child svg { width: 44px; height: 44px; }

/* sheet tabs */
.tabbar { height: 41px; flex: none; background: #e6e6e6; border-top: 2px solid #a8a8a8; border-bottom: 2px solid #bdbdbd; display: flex; align-items: stretch; position: relative; }
.nav-arrows { width: 140px; flex: none; display: flex; align-items: center; padding-left: 31px; gap: 29px; }
.na { width: 0; height: 0; border-top: 8px solid transparent; border-bottom: 8px solid transparent; }
.na-l { border-right: 7px solid #c8c8c8; }
.na-r { border-left: 7px solid #c8c8c8; }
.sheet-tab { font-family: "Liberation Sans", sans-serif; font-size: 27.500px; line-height: 32px; text-align: center; flex: none; }
.st-one { width: 117px; margin-top: 1px; background: #fff2cc; color: #111; border-left: 1px solid #9a9a9a; margin-bottom: 1px; padding-right: 3px; }
.st-two { width: 116px; margin-top: -2px; padding-top: 3px; background: linear-gradient(#fff, #cdd9ec); color: #217346; border-bottom: 4px solid #217346; margin-bottom: 1px; border-left: 2px solid #fff; border-right: 2px solid #fff; }
.add-sheet { width: 34px; height: 34px; margin: 1px 0 0 44px; flex: none; }
.spacer { flex: 1; }
.grip-h { margin: 0 21px 0 0; }
.scroll-left { width: 33px; flex: none; margin: 2px 0 1px; background: #fff; border: 2px solid #d0d0d0; display: flex; align-items: center; justify-content: center; }
.scroll-left i { width: 0; height: 0; border-top: 8px solid transparent; border-bottom: 8px solid transparent; border-right: 6px solid #666; }
.scroll-track { width: 487px; flex: none; margin: 2px 0 1px; background: #d8d8d8; }
.scroll-thumb { width: 54px; flex: none; margin: 2px 0 1px; background: #fff; border: 1px solid #c0c0c0; border-right: 0; }
.status { height: 8px; flex: none; background: #f1f1f1; display: flex; justify-content: flex-end; }
.status-end { width: 54px; background: #c8c8c8; }
```
